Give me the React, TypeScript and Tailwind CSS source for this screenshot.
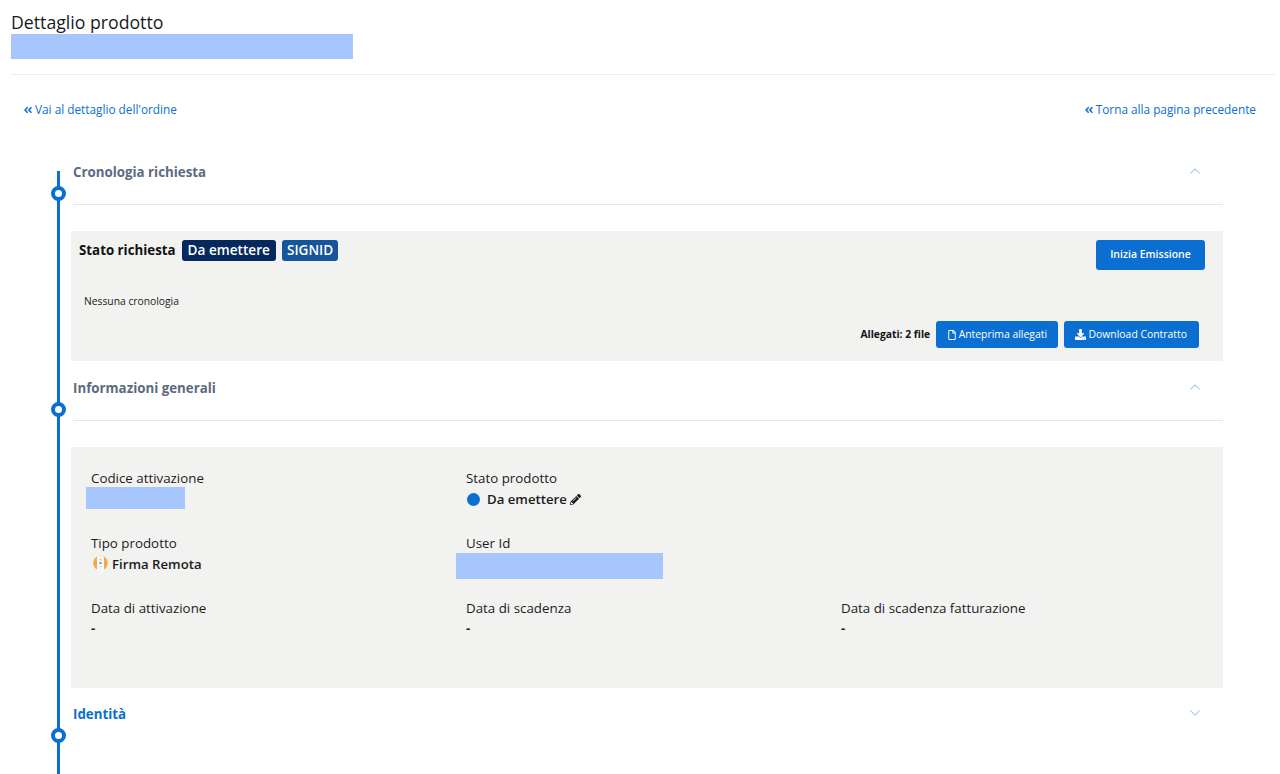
import type { ReactNode } from 'react'
import { ChevronDown, ChevronUp } from 'lucide-react'
import { FaAngleDoubleLeft, FaDownload, FaPencilAlt, FaRegFile } from 'react-icons/fa'

function BackLink({ label }: { label: string }) {
  return (
    <a className="flex items-center gap-[2px] text-[11.8px] text-[#0b6fd1]">
      <FaAngleDoubleLeft size={10} />
      {label}
    </a>
  )
}

function Section({
  title,
  open = true,
  children,
}: {
  title: string
  open?: boolean
  children?: ReactNode
}) {
  const Chevron = open ? ChevronUp : ChevronDown
  return (
    <section className="relative">
      <span className="absolute left-[-20px] top-[25px] h-[15px] w-[15px] rounded-full border-[4px] border-[#0b6fd1] bg-white" />
      <div
        className={`ml-[2px] flex h-[44px] items-start justify-between border-b ${
          open ? 'border-[#e6e6e6]' : 'border-[#fdfdfd]'
        }`}
      >
        <h2
          className={`text-[13.3px] font-bold leading-[22px] ${
            open ? 'text-[#5b6b80]' : 'text-[#0b6fd1]'
          }`}
        >
          {title}
        </h2>
        <Chevron size={18} strokeWidth={1.3} className="mr-[19px] mt-[1px] text-[#7eb0e8]" />
      </div>
      {children}
    </section>
  )
}

function Field({ label, children }: { label: string; children: ReactNode }) {
  return (
    <div className="h-[65px]">
      <p className="text-[13.33px] leading-[20px] text-[#1c1c1c]">{label}</p>
      <div className="text-[13.2px] font-semibold leading-[22px] text-[#1c1c1c]">{children}</div>
    </div>
  )
}

function ActionButton({ icon, label, spacing }: { icon: ReactNode; label: string; spacing: string }) {
  return (
    <button className={`flex h-[27px] items-center rounded-[3px] bg-[#0b6fd1] text-[10.4px] text-white ${spacing}`}>
      {icon}
      {label}
    </button>
  )
}

function ProductIcon() {
  return (
    <svg width="17" height="18" viewBox="0 0 17 18" className="mr-[3px] ml-[1px] shrink-0">
      <circle cx="8.5" cy="8" r="7.3" fill="#f5ac3e" />
      <rect x="5" y="1" width="7" height="16" rx="1.5" fill="#f7f7f7" />
      <rect x="7.5" y="4" width="2" height="1.5" fill="#c5cbd3" />
      <rect x="7.5" y="7" width="2" height="2" fill="#4f94e0" />
      <rect x="7.5" y="11" width="2" height="1" fill="#c5cbd3" />
    </svg>
  )
}

export default function App() {
  return (
    <div className="h-[774px] overflow-hidden bg-white font-['Open_Sans',sans-serif]">
      <header className="mx-[11px] mr-[5px] h-[75px] border-b border-[#ececec] pt-[11px]">
        <h1 className="text-[17.7px] leading-[23px] text-[#1a1a1a]">Dettaglio prodotto</h1>
        <div className="h-[25px] w-[342px] bg-[#a8c6fe]" />
      </header>

      <nav className="flex h-[86px] items-center justify-between pb-[20px] pl-[23px] pr-[24px] pt-[3px]">
        <BackLink label="Vai al dettaglio dell'ordine" />
        <BackLink label="Torna alla pagina precedente" />
      </nav>

      <main className="relative ml-[57px] mr-[57px] pl-[14px]">
        <span className="absolute bottom-0 left-0 top-[10px] w-[3px] bg-[#0b6fd1]" />

        <Section title="Cronologia richiesta">
          <div className="mt-[26px] h-[130px] bg-[#f2f2f1] pl-[8px] pr-[18px] pt-[9px]">
            <div className="flex items-start justify-between">
              <div className="flex items-center">
                <span className="mr-[6px] text-[13.3px] font-bold text-[#111]">Stato richiesta</span>
                <span className="mr-[6px] flex h-[21px] items-center rounded-[3px] bg-[#06285c] px-[6px] text-[13.6px] font-semibold text-white">
                  Da emettere
                </span>
                <span className="flex h-[21px] items-center rounded-[3px] bg-[#14559b] px-[5px] text-[13.6px] font-semibold text-white">
                  SIGNID
                </span>
              </div>
              <button className="h-[30px] w-[109px] rounded-[3px] bg-[#0b6fd1] text-[10.5px] font-semibold text-white">
                Inizia Emissione
              </button>
            </div>
            <p className="ml-[5px] mt-[23px] text-[10.3px] leading-[16px] text-[#1a1a1a]">Nessuna cronologia</p>
            <div className="mr-[6px] mt-[12px] flex items-center justify-end gap-[6px]">
              <span className="text-[10.3px] font-bold text-[#111]">Allegati: 2 file</span>
              <ActionButton spacing="gap-[2px] px-[10.5px]" icon={<FaRegFile size={10} />} label="Anteprima allegati" />
              <ActionButton spacing="gap-[3px] pl-[11px] pr-[12px]" icon={<FaDownload size={11} />} label="Download Contratto" />
            </div>
          </div>
        </Section>

        <div className="mt-[16px]">
          <Section title="Informazioni generali">
            <div className="mt-[26px] grid h-[241px] grid-cols-[375px_375px_1fr] content-start bg-[#f2f2f1] pl-[20px] pt-[21px]">
              <Field label="Codice attivazione">
                <div className="-ml-[5px] -mt-[1px] h-[22px] w-[99px] bg-[#a8c6fe]" />
              </Field>
              <Field label="Stato prodotto">
                <span className="flex items-center">
                  <span className="ml-[1px] mr-[7px] h-[13px] w-[13px] rounded-full bg-[#0b6fd1]" />
                  Da emettere
                  <FaPencilAlt size={11} className="ml-[3px]" />
                </span>
              </Field>
              <div />
              <Field label="Tipo prodotto">
                <span className="flex items-center">
                  <ProductIcon />
                  Firma Remota
                </span>
              </Field>
              <Field label="User Id">
                <div className="-ml-[10px] h-[26px] w-[207px] bg-[#a8c6fe]" />
              </Field>
              <div />
              <Field label="Data di attivazione">
                <span className="relative -top-[1px] font-bold">-</span>
              </Field>
              <Field label="Data di scadenza">
                <span className="relative -top-[1px] font-bold">-</span>
              </Field>
              <Field label="Data di scadenza fatturazione">
                <span className="relative -top-[1px] font-bold">-</span>
              </Field>
            </div>
          </Section>
        </div>

        <div className="mt-[15px] h-[80px]">
          <Section title="Identità" open={false} />
        </div>
      </main>
    </div>
  )
}
